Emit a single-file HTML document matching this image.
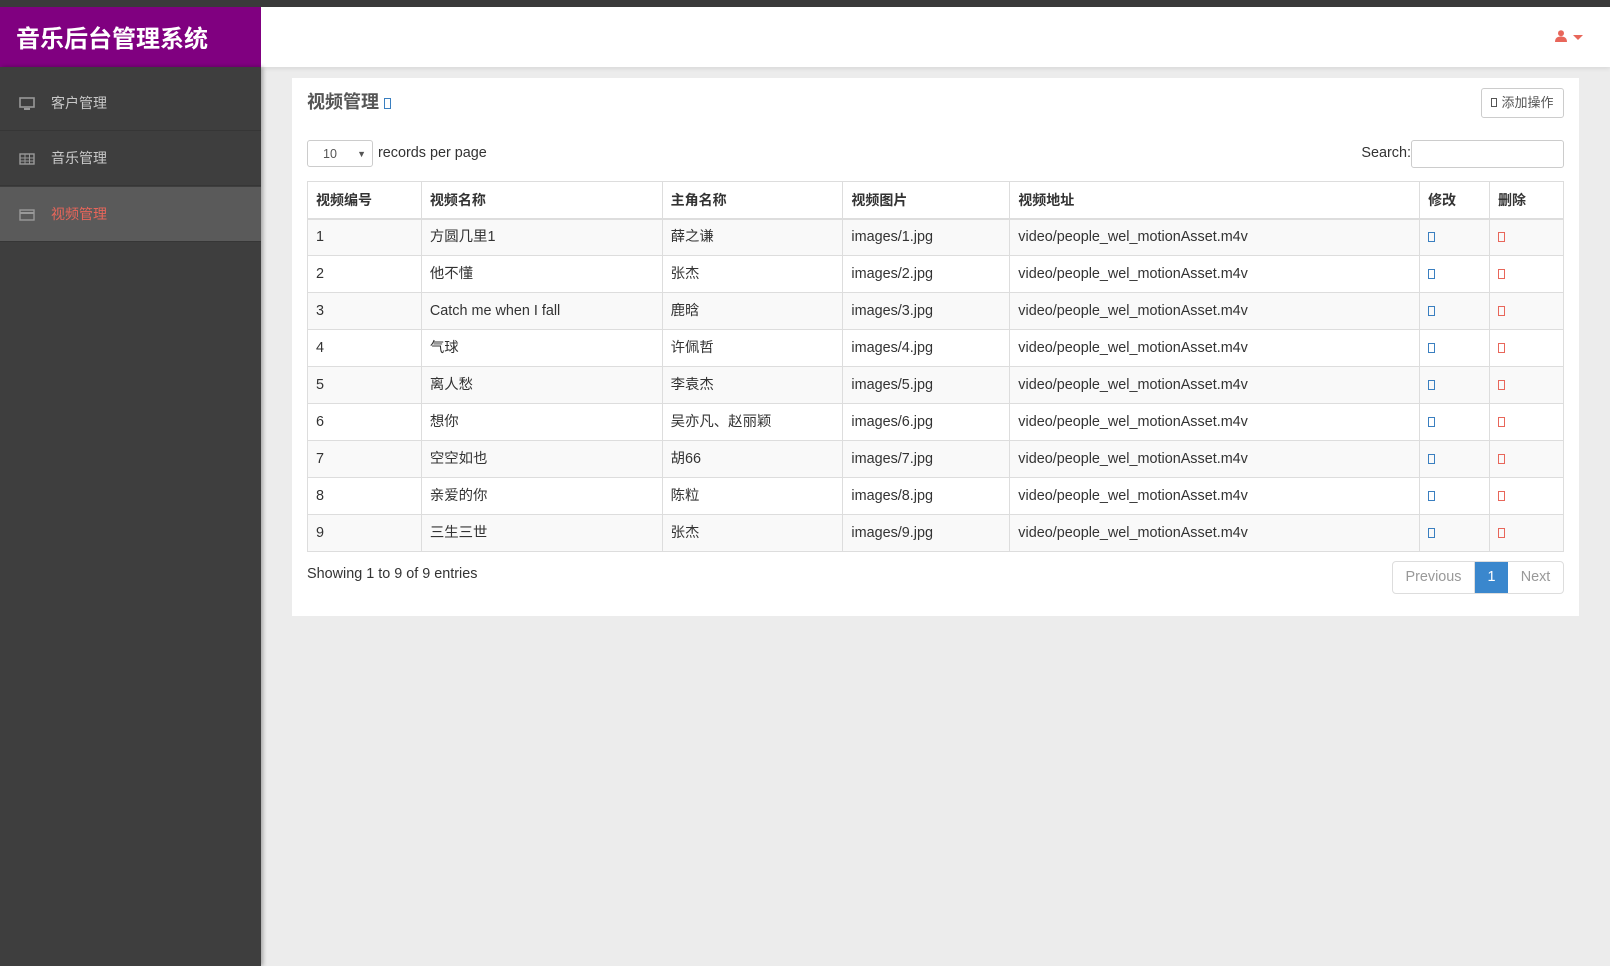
<!DOCTYPE html>
<html><head><meta charset="utf-8"><style>
*{box-sizing:border-box;margin:0;padding:0}
body{width:1610px;height:966px;overflow:hidden;background:#ececec;font-family:"Liberation Sans","Noto Sans CJK SC",sans-serif;font-size:14.4px;color:#333;position:relative}
.topbar{position:absolute;left:0;top:0;width:1610px;height:7px;background:#3a3a3a}
.header{position:absolute;left:261px;top:7px;right:0;height:60px;background:#fff;box-shadow:0 2px 4px rgba(0,0,0,.08)}
.logo{position:absolute;left:0;top:7px;width:261px;height:60px;background:#800080;color:#fff;font-weight:bold;font-size:24px;line-height:60px;padding-left:16px;font-family:"Noto Sans CJK SC",sans-serif}
.side{position:absolute;left:0;top:67px;width:261px;bottom:0;background:#3e3e3e;box-shadow:2px 0 4px rgba(0,0,0,.3)}
.item{height:55px;line-height:55px;color:#c8c8c8;font-size:14px;padding-left:51px;border-bottom:1px solid #363636;position:relative}
.item.act{background:#5a5a5a;color:#e8665a;margin-top:1px}
.item svg{position:absolute;left:19px;top:21px}
.panel{position:absolute;left:292px;top:78px;width:1287px;height:538px;background:#fff}
.abs{position:absolute}
.box{display:inline-block;width:7px;height:10px;border:1px solid #3a7fc0;vertical-align:middle}
.btn{border:1px solid #ccc;border-radius:3px;background:#fff;font-size:13px;color:#555}
table{position:absolute;left:15px;top:103px;border-collapse:collapse;width:1257px}
td,th{border:1px solid #ddd;height:37px;padding:0 8px;text-align:left;font-size:14.4px;line-height:20px;vertical-align:middle}
th{font-weight:bold;font-size:14px;border-bottom:2px solid #ddd}
tbody tr:nth-child(odd){background:#f9f9f9}
.e{border-color:#3a7fc0}.d{border-color:#e8665a}
</style></head><body>
<div class="topbar"></div>
<div class="header"><div class="abs" style="right:44px;top:23px;width:11px;height:12px">
<svg width="12" height="12" viewBox="0 0 12 12"><circle cx="6" cy="3.2" r="3" fill="#e8665a"/><path d="M0 12 Q0 6.5 6 6.5 Q12 6.5 12 12Z" fill="#e8665a"/></svg></div>
<div class="abs" style="right:27px;top:28px;width:0;height:0;border-left:5px solid transparent;border-right:5px solid transparent;border-top:5px solid #e8665a"></div></div>
<div class="logo">音乐后台管理系统</div>
<div class="side">
<div class="item" style="margin-top:9px"><svg width="16" height="14" viewBox="0 0 16 14"><rect x="1" y="1" width="14" height="9" fill="none" stroke="#999" stroke-width="1.6"/><rect x="5" y="11" width="6" height="2" fill="#999"/></svg>客户管理</div>
<div class="item"><svg width="16" height="14" viewBox="0 0 16 14"><rect x="1" y="2" width="14" height="10" fill="none" stroke="#999" stroke-width="1.4"/><path d="M1 6H15M1 9H15M6 2V12M10.5 2V12" stroke="#999" stroke-width="1"/></svg>音乐管理</div>
<div class="item act"><svg width="16" height="14" viewBox="0 0 16 14"><rect x="1" y="2" width="14" height="10" fill="none" stroke="#999" stroke-width="1.4"/><rect x="1" y="4" width="14" height="2" fill="#999"/></svg>视频管理</div>
</div>
<div class="panel">
<div class="abs" style="left:15px;top:10px;font-size:18px;font-weight:bold;color:#555">视频管理 <span class="box" style="width:7px;height:11px"></span></div>
<div class="abs btn" style="left:1189px;top:10px;width:83px;height:30px;line-height:28px;text-align:center"><span style="display:inline-block;width:6px;height:9px;border:1px solid #555;margin-right:4px"></span>添加操作</div>
<div class="abs btn" style="left:15px;top:62px;width:66px;height:27px;line-height:27px;padding-left:15px;font-size:12.5px">10<span style="position:absolute;right:6px;font-size:9px">▼</span></div>
<div class="abs" style="left:86px;top:62px;line-height:27px">records per page</div>
<div class="abs" style="right:168px;top:62px;line-height:27px">Search:</div>
<div class="abs btn" style="left:1119px;top:62px;width:153px;height:28px"></div>
<table>
<colgroup><col style="width:114px"><col style="width:241px"><col style="width:181px"><col style="width:167px"><col style="width:410px"><col style="width:70px"><col style="width:74px"></colgroup>
<thead><tr><th>视频编号</th><th>视频名称</th><th>主角名称</th><th>视频图片</th><th>视频地址</th><th>修改</th><th>删除</th></tr></thead>
<tbody>
<tr><td>1</td><td>方圆几里1</td><td>薛之谦</td><td>images/1.jpg</td><td>video/people_wel_motionAsset.m4v</td><td><span class="box e"></span></td><td><span class="box d"></span></td></tr>
<tr><td>2</td><td>他不懂</td><td>张杰</td><td>images/2.jpg</td><td>video/people_wel_motionAsset.m4v</td><td><span class="box e"></span></td><td><span class="box d"></span></td></tr>
<tr><td>3</td><td>Catch me when I fall</td><td>鹿晗</td><td>images/3.jpg</td><td>video/people_wel_motionAsset.m4v</td><td><span class="box e"></span></td><td><span class="box d"></span></td></tr>
<tr><td>4</td><td>气球</td><td>许佩哲</td><td>images/4.jpg</td><td>video/people_wel_motionAsset.m4v</td><td><span class="box e"></span></td><td><span class="box d"></span></td></tr>
<tr><td>5</td><td>离人愁</td><td>李袁杰</td><td>images/5.jpg</td><td>video/people_wel_motionAsset.m4v</td><td><span class="box e"></span></td><td><span class="box d"></span></td></tr>
<tr><td>6</td><td>想你</td><td>吴亦凡、赵丽颖</td><td>images/6.jpg</td><td>video/people_wel_motionAsset.m4v</td><td><span class="box e"></span></td><td><span class="box d"></span></td></tr>
<tr><td>7</td><td>空空如也</td><td>胡66</td><td>images/7.jpg</td><td>video/people_wel_motionAsset.m4v</td><td><span class="box e"></span></td><td><span class="box d"></span></td></tr>
<tr><td>8</td><td>亲爱的你</td><td>陈粒</td><td>images/8.jpg</td><td>video/people_wel_motionAsset.m4v</td><td><span class="box e"></span></td><td><span class="box d"></span></td></tr>
<tr><td>9</td><td>三生三世</td><td>张杰</td><td>images/9.jpg</td><td>video/people_wel_motionAsset.m4v</td><td><span class="box e"></span></td><td><span class="box d"></span></td></tr>
</tbody></table>
<div class="abs" style="left:15px;top:488px">Showing 1 to 9 of 9 entries</div>
<div class="abs" style="left:1100px;top:483px;height:33px;display:flex;border:1px solid #ddd;border-radius:4px;overflow:hidden;line-height:31px;color:#999">
<div style="width:82px;text-align:center;border-right:1px solid #ddd">Previous</div>
<div style="width:33px;text-align:center;background:#3a87cd;color:#fff">1</div>
<div style="width:55px;text-align:center">Next</div></div>
</div>
</body></html>
